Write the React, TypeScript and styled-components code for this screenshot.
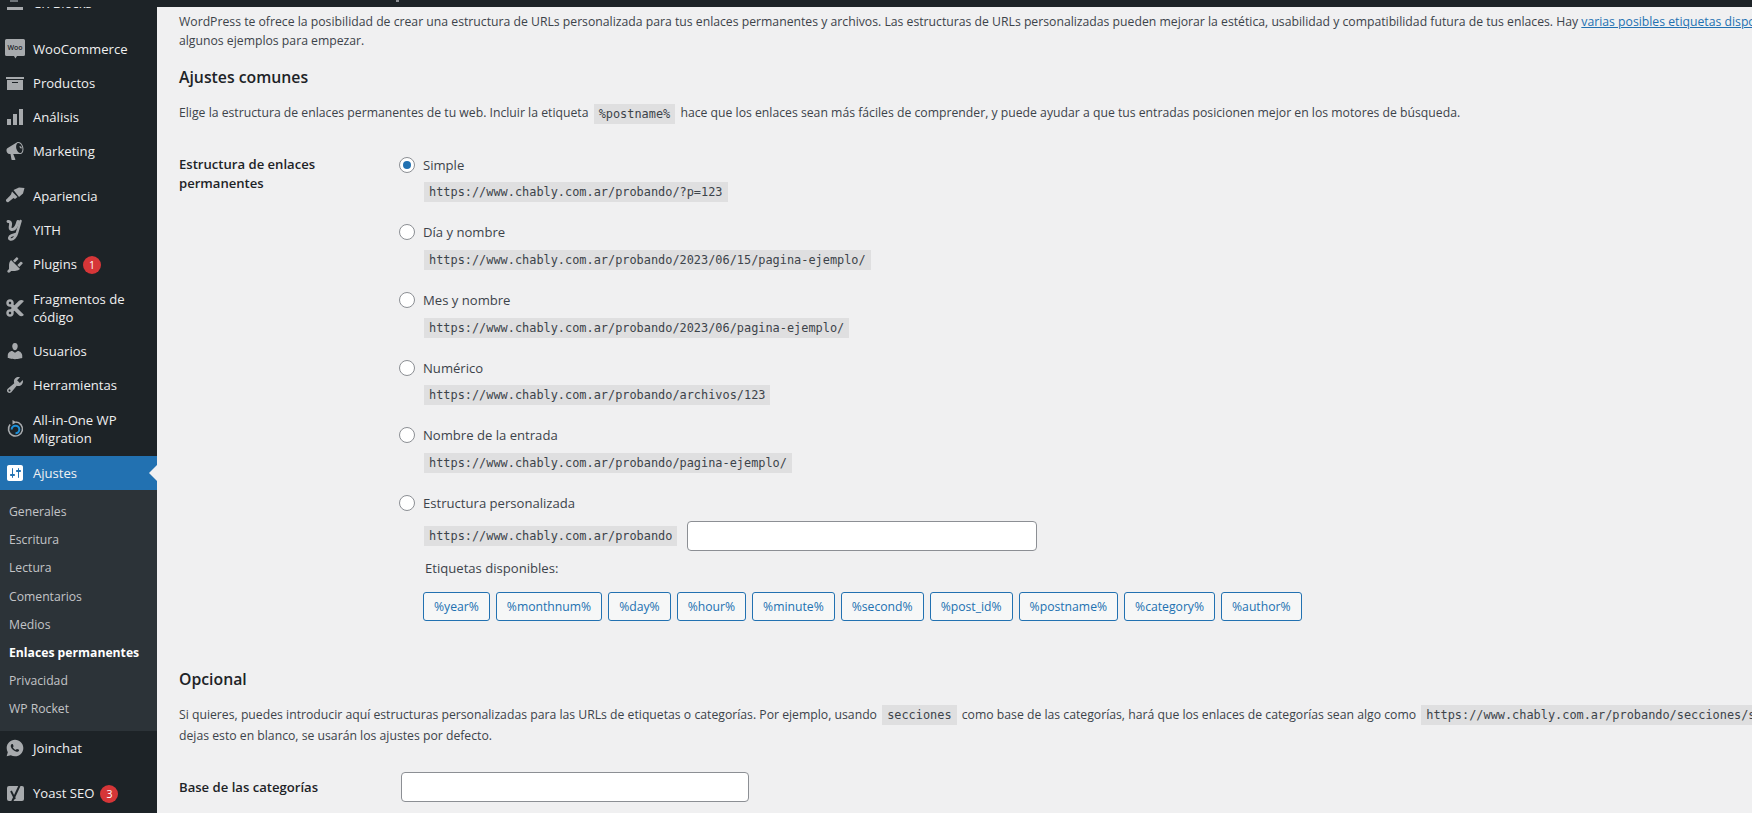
import React from "react";
import styled, { createGlobalStyle } from "styled-components";
import { FaCut } from "react-icons/fa";
import { RiWhatsappFill } from "react-icons/ri";

const GlobalStyle = createGlobalStyle`
  html, body {
    margin: 0;
    padding: 0;
    background: #f0f0f1;
    overflow: hidden;
  }
  * {
    box-sizing: border-box;
  }
`;

const FONT = `"Open Sans", "Noto Sans", sans-serif`;
const MONO = `"DejaVu Sans Mono", "Liberation Mono", monospace`;

const ICON = {
  archive: "M19 4v2H1V4h18zM2 7h16v10H2V7zm11 3V9H7v1h6z",
  chart: "M18 18V2h-4v16h4zm-6 0V7H8v11h4zm-6 0v-6H2v6h4z",
  megaphone:
    "M18.15 5.94c.46 1.62.38 3.22-.02 4.48-.42 1.28-1.26 2.18-2.3 2.48-.16.06-.26.06-.4.06-.06.02-.12.02-.18.02-.06.02-.14.02-.22.02h-6.8l2.22 5.5c.02.14-.06.26-.14.34-.08.1-.24.16-.34.16H6.95c-.1 0-.26-.06-.34-.16-.08-.08-.16-.2-.14-.34l-1-5.5H4.25l-.02-.02c-.5.06-1.08-.18-1.54-.62s-.88-1.08-1.06-1.88c-.24-.8-.2-1.56-.02-2.2.18-.62.58-1.08 1.06-1.3l.02-.02 9-5.4c.1-.06.18-.1.24-.16.06-.04.14-.08.24-.12.16-.08.28-.12.5-.18 1.04-.3 2.24.1 3.22.98.98.88 1.84 2.24 2.3 3.86zm-2.58 5.98h-.02c.4-.1.74-.34 1.04-.7.58-.7.86-1.76.86-3.04 0-.64-.1-1.3-.28-1.98-.34-1.36-1.02-2.5-1.78-3.2s-1.68-1.1-2.46-.88c-.38.12-.72.34-.98.7-.58.7-.84 1.76-.84 3.04 0 .64.08 1.3.26 1.98.34 1.34 1 2.48 1.78 3.18.78.72 1.68 1.1 2.42.9zm-1.6-6.78c.34-.4 1.2-.32 1.96.3.74.6 1.14 1.52.8 1.88-.24.32-.68.24-1.2-.14-.72-.54-1.38-1.58-.56-2.04z",
  brush:
    "M8.500 4L14 1.500 19.500 2 18 7.500 14 11zM7 5.500L12.500 11 10 13 8.500 12 3.500 16C2.500 16.800.5 15.500 1 14 1.500 13 3 12 6 8.500z",
  plugin:
    "M13.11 4.36L9.87 7.6 8 5.73l3.24-3.24c.35-.34 1.05-.2 1.56.32.52.51.66 1.21.31 1.55zm-8 1.77l.91-1.12 9.01 9.01-1.19.84c-.71.71-2.63 1.16-3.82 1.16H6.14L4.9 17.26c-.59.59-1.54.59-2.12 0-.59-.58-.59-1.53 0-2.12l1.24-1.24v-3.88c0-1.13.4-3.19 1.09-3.89zm7.26 3.97l3.24-3.24c.34-.35 1.04-.21 1.55.31.52.51.66 1.21.31 1.55l-3.24 3.25z",
  users:
    "M10 9.25c-2.27 0-2.73-3.44-2.73-3.44C7 4.02 7.82 2 9.97 2c2.16 0 2.98 2.02 2.71 3.81 0 0-.41 3.44-2.68 3.44zm0 2.57L12.72 10c2.39 0 4.52 2.33 4.52 4.53v2.49s-3.65 1.13-7.24 1.13c-3.65 0-7.24-1.13-7.24-1.13v-2.49c0-2.25 1.94-4.48 4.47-4.48z",
  tools:
    "M16.68 9.77c-1.34 1.34-3.3 1.67-4.95.99l-5.41 6.52c-.99.99-2.59.99-3.58 0s-.99-2.59 0-3.57l6.52-5.42c-.68-1.65-.35-3.61.99-4.95 1.28-1.28 3.12-1.62 4.72-1.06l-2.89 2.89 2.82 2.82 2.86-2.87c.53 1.58.18 3.39-1.08 4.65zM3.81 16.21c.4.39 1.04.39 1.43 0 .4-.4.4-1.04 0-1.43-.39-.4-1.03-.4-1.43 0-.39.39-.39 1.03 0 1.43z",
  settings:
    "M18 16V4c0-1.1-.9-2-2-2H4c-1.1 0-2 .9-2 2v12c0 1.1.9 2 2 2h12c1.1 0 2-.9 2-2zM8 11h1c.55 0 1 .45 1 1s-.45 1-1 1H8v1.5c0 .28-.22.5-.5.5s-.5-.22-.5-.5V13H6c-.55 0-1-.45-1-1s.45-1 1-1h1V5.5c0-.28.22-.5.5-.5s.5.22.5.5V11zm5-2h-1c-.55 0-1-.45-1-1s.45-1 1-1h1V5.5c0-.28.22-.5.5-.5s.5.22.5.5V7h1c.55 0 1 .45 1 1s-.45 1-1 1h-1v5.5c0 .28-.22.5-.5.5s-.5-.22-.5-.5V9z",
};

const DashIcon = ({ d, color = "#a7aaad" }: { d: string; color?: string }) => (
  <svg width="20" height="20" viewBox="0 0 20 20" fill={color}>
    <path d={d} />
  </svg>
);

const WooIcon = () => (
  <svg width="20" height="20" viewBox="0 0 20 20">
    <path
      d="M1.500 0h17A1.500 1.500 0 0 1 20 1.500v14a1.500 1.500 0 0 1-1.500 1.500H12l-1.600 2.400L9 17H1.500A1.500 1.500 0 0 1 0 15.500v-14A1.500 1.500 0 0 1 1.500 0z"
      fill="#a7aaad"
    />
    <text x="10" y="11" textAnchor="middle" fontFamily="Open Sans" fontSize="7" fontWeight="600" fill="#1d2327">
      Woo
    </text>
  </svg>
);

const YithIcon = () => (
  <svg width="20" height="22" viewBox="0 0 20 22" fill="none" stroke="#a7aaad" strokeLinecap="round">
    <path d="M3 2.500C5 2 6 4 5.500 6 5 8 4.500 10 6.500 10.500 9 11 11.500 8 13 2.500" strokeWidth="3" />
    <path d="M15.500 2L12 14C11 18 8 21 5.500 20.500 3.500 20 4 17.500 6.500 16.500L11 15" strokeWidth="2.600" />
  </svg>
);

const MigrationIcon = () => (
  <svg width="20" height="20" viewBox="0 0 20 20" fill="none">
    <path d="M10.500 3a7 7 0 1 1-5.400 2.500" stroke="#a7aaad" strokeWidth="1.600" />
    <path d="M7.500 1v4.500l3.800-2.300z" fill="#a7aaad" />
    <path d="M6.700 10.500a3.800 3.800 0 1 1 3.800 3.800" stroke="#1d8fd8" strokeWidth="2" />
  </svg>
);

const YoastIcon = () => (
  <svg width="20" height="20" viewBox="0 0 20 20" fill="none">
    <rect x="2" y="3" width="17" height="15" rx="2" fill="#a7aaad" />
    <path d="M6 8L10 16" stroke="#1d2327" strokeWidth="1.800" />
    <path d="M15.500 .5L6.500 20" stroke="#1d2327" strokeWidth="2" />
  </svg>
);

const Page = styled.div`
  position: relative;
  display: flex;
  width: 1752px;
  height: 813px;
  overflow: hidden;
  background: #f0f0f1;
  font-family: ${FONT};
`;

const AdminBar = styled.div`
  position: absolute;
  top: 0;
  left: 0;
  width: 100%;
  height: 7px;
  background: #1d2327;
  z-index: 5;
`;

const BarTick = styled.span<{ $left: number; $width: number; $color: string }>`
  position: absolute;
  top: 0;
  left: ${(p) => p.$left}px;
  width: ${(p) => p.$width}px;
  height: 2px;
  background: ${(p) => p.$color};
`;

const Sidebar = styled.nav`
  flex: 0 0 157px;
  height: 100%;
  background: #1d2327;
  overflow: hidden;
`;

const Menu = styled.ul`
  list-style: none;
  margin: -14px 0 0;
  padding: 0;
`;

const MenuItem = styled.li<{ $active?: boolean; $gap?: number }>`
  position: relative;
  display: flex;
  align-items: center;
  min-height: 34px;
  margin-top: ${(p) => p.$gap ?? 0}px;
  padding: 8px 4px 8px 33px;
  background: ${(p) => (p.$active ? "#2271b1" : "transparent")};
  color: #f0f0f1;
  font-size: 13.100px;
  line-height: 18px;
`;

const IconSlot = styled.span`
  position: absolute;
  left: 5px;
  top: 50%;
  transform: translateY(-50%);
  display: flex;
  width: 20px;
  height: 20px;
  align-items: center;
  justify-content: center;
  color: #a7aaad;
`;

const ActiveArrow = styled.span`
  position: absolute;
  right: 0;
  top: 50%;
  margin-top: -8px;
  border: 8px solid transparent;
  border-right-color: #f0f0f1;
  border-left-width: 0;
`;

const Badge = styled.span`
  display: inline-flex;
  width: 18px;
  height: 18px;
  margin-left: 6px;
  align-items: center;
  justify-content: center;
  border-radius: 50%;
  background: #d63638;
  color: #fff;
  font-size: 10.500px;
`;

const SubMenu = styled.ul`
  list-style: none;
  margin: 0;
  padding: 8px 0 7.400px;
  background: #2c3338;
`;

const SubItem = styled.li<{ $current?: boolean }>`
  height: 28.200px;
  padding-left: 9px;
  color: ${(p) => (p.$current ? "#fff" : "#c3c4c7")};
  font-size: 12.200px;
  font-weight: ${(p) => (p.$current ? 700 : 400)};
  line-height: 28px;
  white-space: nowrap;
`;

const Content = styled.main`
  flex: 1;
  min-width: 0;
  padding: 12px 0 0 22px;
  color: #3c434a;
  font-size: 12.230px;
  white-space: nowrap;
  overflow: hidden;
`;

const Intro = styled.p`
  margin: 0;
  line-height: 19px;
`;

const Link = styled.a`
  color: #2271b1;
  text-decoration: underline;
`;

const Heading = styled.h2<{ $top: number }>`
  margin: ${(p) => p.$top}px 0 0;
  color: #1d2327;
  font-size: 15.800px;
  font-weight: 600;
  line-height: 22px;
`;

const Description = styled.p<{ $top: number }>`
  margin: ${(p) => p.$top}px 0 0;
  line-height: 21px;
`;

const Code = styled.code`
  display: inline-block;
  height: 20px;
  margin: 0 2px;
  padding: 0 5px;
  background: rgba(0, 0, 0, 0.07);
  color: #3c434a;
  font-family: ${MONO};
  font-size: 11.900px;
  line-height: 20px;
  vertical-align: middle;
`;

const FormRow = styled.section<{ $top: number }>`
  display: grid;
  grid-template-columns: 220px 1fr;
  margin-top: ${(p) => p.$top}px;
`;

const RowLabel = styled.div`
  color: #1d2327;
  font-size: 13.100px;
  font-weight: 600;
  line-height: 19px;
`;

const OptionList = styled.div`
  display: flex;
  flex-direction: column;
  gap: 20.200px;
`;

const Option = styled.div`
  display: flex;
  flex-direction: column;
  gap: 7.500px;
`;

const OptionHead = styled.label`
  display: flex;
  align-items: center;
  height: 20px;
  gap: 8px;
  color: #3c434a;
  font-size: 13.100px;
  font-weight: 500;
`;

const Radio = styled.span<{ $checked?: boolean }>`
  display: inline-flex;
  width: 16px;
  height: 16px;
  align-items: center;
  justify-content: center;
  border: 1px solid #8c8f94;
  border-radius: 50%;
  background: #fff;

  &::before {
    content: "";
    display: ${(p) => (p.$checked ? "block" : "none")};
    width: 8px;
    height: 8px;
    border-radius: 50%;
    background: #2271b1;
  }
`;

const OptionCode = styled.div`
  margin-left: 25px;
  display: flex;
  align-items: center;
  gap: 10px;

  ${Code} {
    margin: 0;
  }
`;

const CustomRow = styled(OptionCode)`
  height: 30px;
`;

const TextInput = styled.input<{ $width: number }>`
  width: ${(p) => p.$width}px;
  height: 30px;
  margin: 0;
  padding: 0 8px;
  border: 1px solid #8c8f94;
  border-radius: 4px;
  background: #fff;
`;

const TagsTitle = styled.div`
  margin: 0 0 0 26px;
  font-size: 13.100px;
  line-height: 20px;
`;

const TagRow = styled.div`
  display: flex;
  gap: 6px;
  margin: 6px 0 0 24px;
`;

const TagButton = styled.button`
  height: 29px;
  padding: 0 10px;
  border: 1px solid #2271b1;
  border-radius: 3px;
  background: #f6f7f7;
  color: #2271b1;
  font-family: ${FONT};
  font-size: 12.200px;
  white-space: nowrap;
`;

const BaseRow = styled.section`
  display: grid;
  grid-template-columns: 222px 1fr;
  align-items: center;
  margin-top: 26px;
`;

const menuBefore = [
  { label: "CR Blocks", icon: <DashIcon d={ICON.archive} />, gap: 0 },
  { label: "WooCommerce", icon: <WooIcon />, gap: 12 },
  { label: "Productos", icon: <DashIcon d={ICON.archive} /> },
  { label: "Análisis", icon: <DashIcon d={ICON.chart} /> },
  { label: "Marketing", icon: <DashIcon d={ICON.megaphone} /> },
  { label: "Apariencia", icon: <DashIcon d={ICON.brush} />, gap: 11.2 },
  { label: "YITH", icon: <YithIcon /> },
  { label: "Plugins", icon: <DashIcon d={ICON.plugin} />, badge: "1" },
  { label: "Fragmentos de código", icon: <FaCut size={20} /> },
  { label: "Usuarios", icon: <DashIcon d={ICON.users} /> },
  { label: "Herramientas", icon: <DashIcon d={ICON.tools} /> },
  { label: "All-in-One WP Migration", icon: <MigrationIcon />, gap: 0.8 },
];

const subItems = [
  "Generales",
  "Escritura",
  "Lectura",
  "Comentarios",
  "Medios",
  "Enlaces permanentes",
  "Privacidad",
  "WP Rocket",
];

const options = [
  { label: "Simple", url: "https://www.chably.com.ar/probando/?p=123", checked: true },
  { label: "Día y nombre", url: "https://www.chably.com.ar/probando/2023/06/15/pagina-ejemplo/" },
  { label: "Mes y nombre", url: "https://www.chably.com.ar/probando/2023/06/pagina-ejemplo/" },
  { label: "Numérico", url: "https://www.chably.com.ar/probando/archivos/123" },
  { label: "Nombre de la entrada", url: "https://www.chably.com.ar/probando/pagina-ejemplo/" },
];

const tags = [
  "%year%",
  "%monthnum%",
  "%day%",
  "%hour%",
  "%minute%",
  "%second%",
  "%post_id%",
  "%postname%",
  "%category%",
  "%author%",
];

const App: React.FC = () => {
  return (
    <Page>
      <GlobalStyle />
      <AdminBar>
        <BarTick $left={10} $width={8} $color="#6e7479" />
        <BarTick $left={396} $width={3} $color="#8c8f94" />
      </AdminBar>

      <Sidebar>
        <Menu>
          {menuBefore.map((item) => (
            <MenuItem key={item.label} $gap={item.gap}>
              <IconSlot>{item.icon}</IconSlot>
              <span>
                {item.label}
                {item.badge ? <Badge>{item.badge}</Badge> : null}
              </span>
            </MenuItem>
          ))}
          <MenuItem $active $gap={1}>
            <IconSlot>
              <DashIcon d={ICON.settings} color="#fff" />
            </IconSlot>
            <span>Ajustes</span>
            <ActiveArrow />
          </MenuItem>
          <SubMenu>
            {subItems.map((label) => (
              <SubItem key={label} $current={label === "Enlaces permanentes"}>
                {label}
              </SubItem>
            ))}
          </SubMenu>
          <MenuItem>
            <IconSlot>
              <RiWhatsappFill size={20} />
            </IconSlot>
            <span>Joinchat</span>
          </MenuItem>
          <MenuItem $gap={11}>
            <IconSlot>
              <YoastIcon />
            </IconSlot>
            <span>
              Yoast SEO<Badge>3</Badge>
            </span>
          </MenuItem>
        </Menu>
      </Sidebar>

      <Content>
        <Intro>
          WordPress te ofrece la posibilidad de crear una estructura de URLs personalizada para tus enlaces permanentes
          y archivos. Las estructuras de URLs personalizadas pueden mejorar la estética, usabilidad y compatibilidad
          futura de tus enlaces. Hay <Link href="#">varias posibles etiquetas disponibles</Link>, y aquí hay
          <br />
          algunos ejemplos para empezar.
        </Intro>

        <Heading $top={16}>Ajustes comunes</Heading>

        <Description $top={14}>
          Elige la estructura de enlaces permanentes de tu web. Incluir la etiqueta <Code>%postname%</Code> hace que los
          enlaces sean más fáciles de comprender, y puede ayudar a que tus entradas posicionen mejor en los motores de
          búsqueda.
        </Description>

        <FormRow $top={31}>
          <RowLabel>
            Estructura de enlaces
            <br />
            permanentes
          </RowLabel>
          <OptionList>
            {options.map((option) => (
              <Option key={option.label}>
                <OptionHead>
                  <Radio $checked={option.checked} />
                  {option.label}
                </OptionHead>
                <OptionCode>
                  <Code>{option.url}</Code>
                </OptionCode>
              </Option>
            ))}
            <Option>
              <OptionHead>
                <Radio />
                Estructura personalizada
              </OptionHead>
              <CustomRow>
                <Code>https://www.chably.com.ar/probando</Code>
                <TextInput $width={350} />
              </CustomRow>
              <TagsTitle>Etiquetas disponibles:</TagsTitle>
              <TagRow>
                {tags.map((tag) => (
                  <TagButton key={tag}>{tag}</TagButton>
                ))}
              </TagRow>
            </Option>
          </OptionList>
        </FormRow>

        <Heading $top={47}>Opcional</Heading>

        <Description $top={14}>
          Si quieres, puedes introducir aquí estructuras personalizadas para las URLs de etiquetas o categorías. Por
          ejemplo, usando <Code>secciones</Code> como base de las categorías, hará que los enlaces de categorías sean
          algo como <Code>https://www.chably.com.ar/probando/secciones/sin-categoria/</Code>. Si
          <br />
          dejas esto en blanco, se usarán los ajustes por defecto.
        </Description>

        <BaseRow>
          <RowLabel>Base de las categorías</RowLabel>
          <TextInput $width={348} />
        </BaseRow>
      </Content>
    </Page>
  );
};

export default App;
